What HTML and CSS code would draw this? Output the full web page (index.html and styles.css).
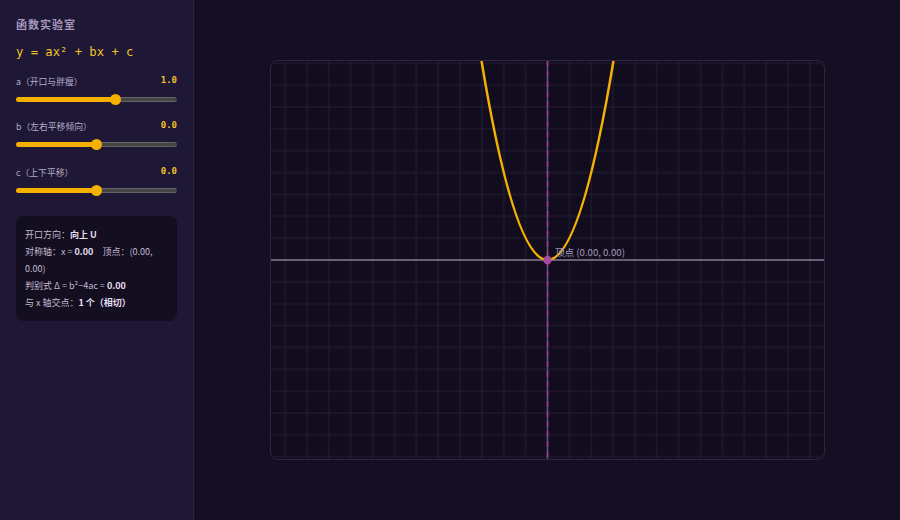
FILE: index.html
```html
<!DOCTYPE html>
<html lang="zh-CN">
<head>
<meta charset="utf-8">
<title>函数实验室</title>
<link rel="stylesheet" href="styles.css">
</head>
<body>
<div class="app">
  <aside class="panel">
    <h1 class="title">函数实验室</h1>
    <div class="formula">y = ax² + bx + c</div>

    <div class="control">
      <div class="control-head">
        <span class="control-label">a（开口与胖瘦）</span>
        <span class="control-value">1.0</span>
      </div>
      <input class="slider" type="range" min="-4" max="4" step="0.1" value="1" style="--p: 61.6%">
    </div>

    <div class="control">
      <div class="control-head">
        <span class="control-label">b（左右平移倾向）</span>
        <span class="control-value">0.0</span>
      </div>
      <input class="slider" type="range" min="-4" max="4" step="0.1" value="0" style="--p: 50%">
    </div>

    <div class="control">
      <div class="control-head">
        <span class="control-label">c（上下平移）</span>
        <span class="control-value">0.0</span>
      </div>
      <input class="slider" type="range" min="-4" max="4" step="0.1" value="0" style="--p: 50%">
    </div>

    <div class="info">
      <p>开口方向：<b>向上 U</b></p>
      <p><span>对称轴：x = </span><b>0.00</b><span class="info-gap"></span><span>顶点：(0.00,</span><br><span>0.00)</span></p>
      <p>判别式 Δ = b²−4ac = <b>0.00</b></p>
      <p>与 x 轴交点：<b>1 个（相切）</b></p>
    </div>
  </aside>

  <main class="stage">
    <div class="plot">
      <svg class="plot-svg" width="553" height="398" viewBox="0 0 553 398">
        <defs>
          <pattern id="grid" width="21.86" height="21.86" patternUnits="userSpaceOnUse" x="265.57" y="188.07">
            <path d="M10.93 0 V21.86 M0 10.93 H21.86" fill="none" stroke="#251d35" stroke-width="1"/>
          </pattern>
        </defs>
        <rect width="553" height="398" fill="url(#grid)"/>
        <!-- axes -->
        <line x1="0" y1="199" x2="553" y2="199" stroke="#847b93" stroke-width="1.5"/>
        <line x1="276.5" y1="0" x2="276.5" y2="398" stroke="#5e566f" stroke-width="1.5"/>
        <!-- axis of symmetry -->
        <line x1="276.5" y1="0" x2="276.5" y2="398" stroke="#a2388e" stroke-width="1.5" stroke-dasharray="6 4"/>
        <!-- y = x² as an exact quadratic curve -->
        <path d="M208.73 -11.07 Q276.5 409.07 344.27 -11.07" fill="none" stroke="#f5b000" stroke-width="2.5"/>
        <circle cx="276.5" cy="199" r="4.2" fill="#a54a9e"/>
        <text class="vertex-label" x="284" y="194.5">顶点 (0.00, 0.00)</text>
      </svg>
    </div>
  </main>
</div>
</body>
</html>
```

FILE: styles.css
```css
* {
  box-sizing: border-box;
}

html, body {
  margin: 0;
  height: 100%;
}

body {
  background: #150f23;
  font-family: "Noto Sans CJK SC", "Noto Sans", sans-serif;
  color: #c8bfd6;
}

.app {
  display: flex;
  width: 900px;
  height: 520px;
}

/* ---- side panel ---- */
.panel {
  width: 194px;
  flex: none;
  background: #1e1735;
  border-right: 1px solid #2b2342;
  padding: 16px 16px 0 16px;
}

.title {
  margin: 0;
  font-size: 11px;
  line-height: 16px;
  font-weight: 700;
  letter-spacing: 1px;
  color: #a898bd;
}

.formula {
  margin-top: 10px;
  font-family: "DejaVu Sans Mono", monospace;
  font-size: 12.2px;
  line-height: 18px;
  color: #f6c12a;
  transform: translateY(1px);
}

.control {
  margin-top: 15px;
}

.control + .control {
  margin-top: 16px;
}

.control-head {
  display: flex;
  justify-content: space-between;
  align-items: center;
  height: 12px;
}

.control-label {
  font-size: 8.8px;
  color: #b3abc4;
}

.control-value {
  font-family: "DejaVu Sans Mono", monospace;
  font-size: 9px;
  font-weight: 700;
  color: #f6c12a;
  margin-top: -3px;
}

.slider {
  -webkit-appearance: none;
  appearance: none;
  display: block;
  width: 100%;
  height: 11px;
  margin: 6.5px 0 0 0;
  padding: 0;
  background: transparent;
}

.slider::-webkit-slider-runnable-track {
  height: 5px;
  border-radius: 3px;
  background:
    linear-gradient(to right, #f5b000 var(--p), transparent var(--p)),
    linear-gradient(to bottom, #636363 0 1px, #454545 1px 4px, #636363 4px);
}

.slider::-webkit-slider-thumb {
  -webkit-appearance: none;
  appearance: none;
  width: 11px;
  height: 11px;
  margin-top: -3px;
  border: none;
  border-radius: 50%;
  background: #f5b000;
}

.info {
  margin-top: 20.5px;
  padding: 10px 9px;
  background: #130e20;
  border-radius: 8px;
  font-size: 9px;
  line-height: 17px;
  color: #c3b9d2;
}

.info p {
  margin: 0;
}

.info b {
  color: #e6def0;
  font-weight: 700;
}

.info-gap {
  display: inline-block;
  width: 9px;
}

/* ---- plotting area ---- */
.stage {
  flex: 1;
  display: flex;
  align-items: center;
  justify-content: center;
}

.plot {
  width: 555px;
  height: 400px;
  border: 1px solid #2e2545;
  border-radius: 8px;
  background: #120d1e;
  overflow: hidden;
}

.plot-svg {
  display: block;
}

.vertex-label {
  font-family: "Noto Sans CJK SC", "Noto Sans", sans-serif;
  font-size: 9.6px;
  fill: #a699b8;
}
```
